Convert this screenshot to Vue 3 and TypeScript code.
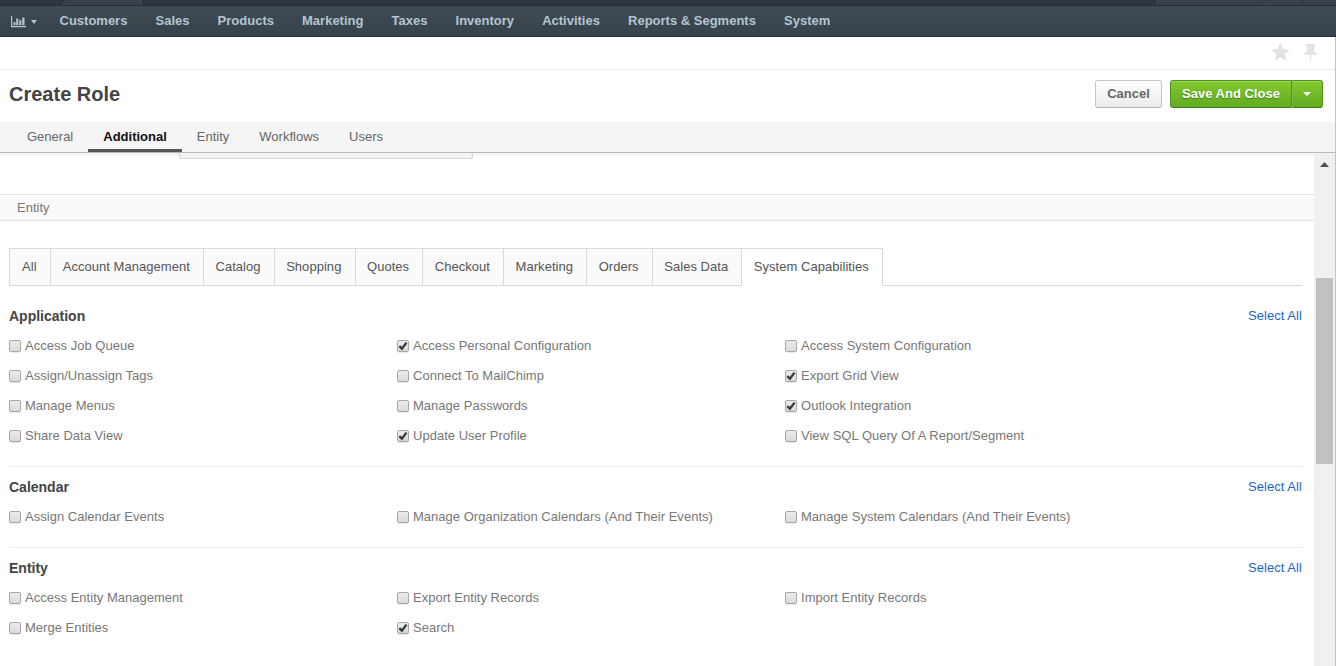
<script setup lang="ts">
interface Permission {
  label: string
  on?: boolean
}

interface Group {
  title: string
  items: Permission[]
}

const menu: string[] = ['Customers', 'Sales', 'Products', 'Marketing', 'Taxes', 'Inventory', 'Activities', 'Reports & Segments', 'System']
const sections: string[] = ['General', 'Additional', 'Entity', 'Workflows', 'Users']
const categories: string[] = ['All', 'Account Management', 'Catalog', 'Shopping', 'Quotes', 'Checkout', 'Marketing', 'Orders', 'Sales Data', 'System Capabilities']

const groups: Group[] = [
  {
    title: 'Application',
    items: [
      { label: 'Access Job Queue' },
      { label: 'Access Personal Configuration', on: true },
      { label: 'Access System Configuration' },
      { label: 'Assign/Unassign Tags' },
      { label: 'Connect To MailChimp' },
      { label: 'Export Grid View', on: true },
      { label: 'Manage Menus' },
      { label: 'Manage Passwords' },
      { label: 'Outlook Integration', on: true },
      { label: 'Share Data View' },
      { label: 'Update User Profile', on: true },
      { label: 'View SQL Query Of A Report/Segment' },
    ],
  },
  {
    title: 'Calendar',
    items: [
      { label: 'Assign Calendar Events' },
      { label: 'Manage Organization Calendars (And Their Events)' },
      { label: 'Manage System Calendars (And Their Events)' },
    ],
  },
  {
    title: 'Entity',
    items: [
      { label: 'Access Entity Management' },
      { label: 'Export Entity Records' },
      { label: 'Import Entity Records' },
      { label: 'Merge Entities' },
      { label: 'Search', on: true },
    ],
  },
]
</script>

<template>
  <div class="page">
    <div class="strip">
      <svg class="strip-left" width="144" height="5" viewBox="0 0 144 5">
        <path d="M64 0H143V5H60Z" fill="#38414b" />
        <path d="M64 0L60 5M143.5 0V5" stroke="#252b35" fill="none" />
      </svg>
      <div class="strip-right"><i></i><i></i></div>
    </div>
    <nav class="nav">
      <span class="dash">
        <svg width="16" height="13" viewBox="0 0 16 13">
          <path d="M0 1h1.200v10h13.800v1.200H0zM2.500 7h2v3.300h-2zM5.200 3.500h2.100v6.800H5.200zM8.200 5.200h2.100v5.100H8.200zM11.200 2.500h2.300v7.800h-2.300z" fill="#b3c5d2" />
        </svg>
        <i class="caret"></i>
      </span>
      <a v-for="m in menu" :key="m">{{ m }}</a>
    </nav>

    <div class="frame">
      <div class="shortcuts">
        <svg class="star" width="19" height="18" viewBox="0 0 19 18">
          <path d="M9.500 0l2.800 5.800 6.200.9-4.500 4.500 1 6.300-5.500-3-5.500 3 1-6.300L.5 6.700l6.200-.9z" fill="#e3e3e3" />
        </svg>
        <svg class="pin" width="13" height="19" viewBox="0 0 13 19">
          <path d="M1.500 1h10v1.800l-1.300.8v5c1.500.6 2.500 1.700 2.600 3.200H7.300L6.700 19h-.6l-.6-7.200H.2c.1-1.500 1.100-2.600 2.600-3.200v-5l-1.300-.8z" fill="#e3e3e3" />
          <path d="M4.500 3.500v5" stroke="#ececec" />
        </svg>
      </div>

      <header class="head">
        <h1>Create Role</h1>
        <button class="btn cancel">Cancel</button>
        <div class="split">
          <button class="btn save">Save And Close</button>
          <button class="btn more"><i class="caret"></i></button>
        </div>
      </header>

      <div class="tabs">
        <span v-for="s in sections" :key="s" :class="{ current: s === 'Additional' }">{{ s }}</span>
      </div>

      <div class="body">
        <main class="content">
          <div class="field"></div>
          <div class="bar">Entity</div>
          <div class="cats">
            <span v-for="c in categories" :key="c" :class="{ open: c === 'System Capabilities' }">{{ c }}</span>
          </div>
          <section v-for="g in groups" :key="g.title" class="group">
            <div class="group-head">
              <h2>{{ g.title }}</h2>
              <a>Select All</a>
            </div>
            <div class="grid">
              <div v-for="p in g.items" :key="p.label" class="perm">
                <span class="box">
                  <svg v-if="p.on" width="10" height="10" viewBox="0 0 10 10">
                    <path d="M1.300 5.200L3.900 7.700L8.500 1.600" fill="none" stroke="#3a3a3a" stroke-width="2.300" />
                  </svg>
                </span>
                <span class="name">{{ p.label }}</span>
              </div>
            </div>
          </section>
        </main>
        <div class="scroll">
          <svg width="9" height="5" viewBox="0 0 9 5"><path d="M0 5L4.500 0L9 5z" fill="#505050" /></svg>
          <div class="thumb"></div>
        </div>
      </div>
    </div>
  </div>
</template>

<style>
body {
  margin: 0;
  overflow: hidden;
}
</style>

<style scoped>
.page {
  width: 1336px;
  height: 666px;
  overflow: hidden;
  display: flex;
  flex-direction: column;
  background: #fff;
  font: 13px/20px "Liberation Sans", Arial, sans-serif;
  color: #777;
  box-sizing: border-box;
}
.page * {
  box-sizing: border-box;
}
.strip {
  height: 5px;
  flex: none;
  display: flex;
  justify-content: space-between;
  background: #31353f;
}
.strip-right {
  width: 182px;
  border-left: 1px solid #252b35;
  background: #38414b;
  display: flex;
  padding-left: 102px;
  gap: 45px;
}
.strip-right i {
  width: 1px;
  height: 1px;
  background: #1d222a;
}
.nav {
  height: 32px;
  flex: none;
  display: flex;
  border-top: 1px solid #252d37;
  border-bottom: 1px solid #252d37;
  background: linear-gradient(#3f4a53, #38424c);
  color: #b3c5d2;
  font-weight: bold;
  line-height: 30px;
  white-space: nowrap;
}
.nav a {
  margin-right: 28.1px;
}
.dash {
  width: 59.5px;
  padding-left: 11px;
  display: flex;
  align-items: center;
  gap: 4px;
}
.caret {
  width: 0;
  height: 0;
  border: 3.5px solid transparent;
  border-top: 4px solid currentColor;
  border-bottom: 0;
}
.dash .caret {
  margin-top: 1px;
}
.frame {
  flex: 1;
  min-height: 0;
  display: flex;
  flex-direction: column;
  border-right: 1px solid #c4c4c4;
}
.shortcuts {
  height: 33px;
  flex: none;
  border-bottom: 1px solid #ededed;
  display: flex;
  justify-content: flex-end;
  align-items: flex-start;
  gap: 14px;
  padding: 6px 18px 0 0;
}
.head {
  height: 52px;
  flex: none;
  display: flex;
  align-items: flex-start;
  padding: 10px 12px 0 9px;
}
h1 {
  flex: 1;
  margin: 0;
  font-size: 20px;
  line-height: 28px;
  color: #444;
}
.btn {
  height: 28px;
  padding: 0 0 1px;
  font: bold 13px/20px "Liberation Sans", Arial, sans-serif;
}
.cancel {
  width: 67px;
  margin-right: 8px;
  color: #666;
  border: 1px solid #c6c6c6;
  border-bottom-color: #b3b3b3;
  border-radius: 3px;
  background: linear-gradient(#fff, #ebebeb);
}
.split {
  display: flex;
}
.save,
.more {
  color: #fff;
  border: 1px solid #4b9424;
  border-bottom-color: #3b7c18;
  background: linear-gradient(#85c92f, #62ab20);
  text-shadow: 0 1px 1px #3f7d14;
  box-shadow: inset 0 1px 0 #9ad650;
}
.save {
  width: 122px;
  border-radius: 3px 0 0 3px;
}
.more {
  width: 31px;
  border-left: 1px solid #7dbb46;
  border-radius: 0 3px 3px 0;
  display: flex;
  align-items: center;
  justify-content: center;
}
.more .caret {
  border-width: 4px 4px 0;
  margin: 1px 2px 0 0;
}
.tabs {
  height: 31px;
  flex: none;
  display: flex;
  padding-left: 12px;
  background: #f5f5f5;
  border-bottom: 1px solid #b9b9b9;
  line-height: 29px;
  color: #666;
}
.tabs span {
  padding: 0 15px;
  height: 30px;
}
.tabs .current {
  font-weight: bold;
  color: #111;
  border-bottom: 3px solid #555;
}
.body {
  flex: 1;
  min-height: 0;
  display: flex;
  box-shadow: inset 0 2px 0 #f4f4f4;
}
.content {
  flex: 1;
  overflow: hidden;
}
.field {
  width: 294px;
  height: 6px;
  margin-left: 179px;
  border: 1px solid #d6d6d6;
  border-top: 0;
  border-radius: 0 0 3px 3px;
  background: #f4f4f4;
}
.bar {
  height: 27px;
  margin-top: 35px;
  padding-left: 17px;
  line-height: 26px;
  background: #fafafa;
  border: solid #e3e3e3;
  border-width: 1px 0;
}
.cats {
  height: 38px;
  margin: 27px 12px 0 9px;
  display: flex;
  border-bottom: 1px solid #d9d9d9;
  border-left: 1px solid #d9d9d9;
  color: #555;
  line-height: 36px;
  white-space: nowrap;
}
.cats span {
  height: 37px;
  padding: 0 13.100px 0 11.500px;
  border: solid #d9d9d9;
  border-width: 1px 1px 0 0;
  background: #fafafa;
  letter-spacing: 0.04px;
}
.cats span:first-child {
  padding: 0 13.600px 0 12px;
}
.cats .open {
  height: 38px;
  background: #fff;
}
.group {
  margin: 0 12px 0 9px;
  padding: 20px 0 15px;
  border-bottom: 1px solid #eee;
}
.group + .group {
  padding-top: 10px;
}
.group:last-child {
  border: 0;
}
.group-head {
  display: flex;
  justify-content: space-between;
  height: 25px;
}
h2 {
  margin: 0;
  font-size: 14px;
  line-height: 21px;
  color: #444;
}
.group-head a {
  color: #1f66c1;
  line-height: 20px;
  letter-spacing: 0.06px;
}
.grid {
  display: grid;
  grid-template-columns: 388px 388px 1fr;
  grid-auto-rows: 30px;
}
.perm {
  display: flex;
  align-items: center;
  white-space: nowrap;
}
.box {
  width: 12px;
  height: 12px;
  margin: 0 4px 1px 0;
  border: 1px solid #a6a6a6;
  border-radius: 2px;
  background: linear-gradient(#ececec, #dadada);
  box-shadow: 0 1px 1px #e8e8e8;
}
.name {
  letter-spacing: 0.02px;
}
.box svg {
  display: block;
}
.scroll {
  width: 21px;
  background: #f0f0f0;
  padding: 9px 2px 0;
  display: flex;
  flex-direction: column;
  align-items: center;
}
.thumb {
  width: 17px;
  height: 186px;
  margin-top: 111px;
  background: #c1c1c1;
}
</style>
